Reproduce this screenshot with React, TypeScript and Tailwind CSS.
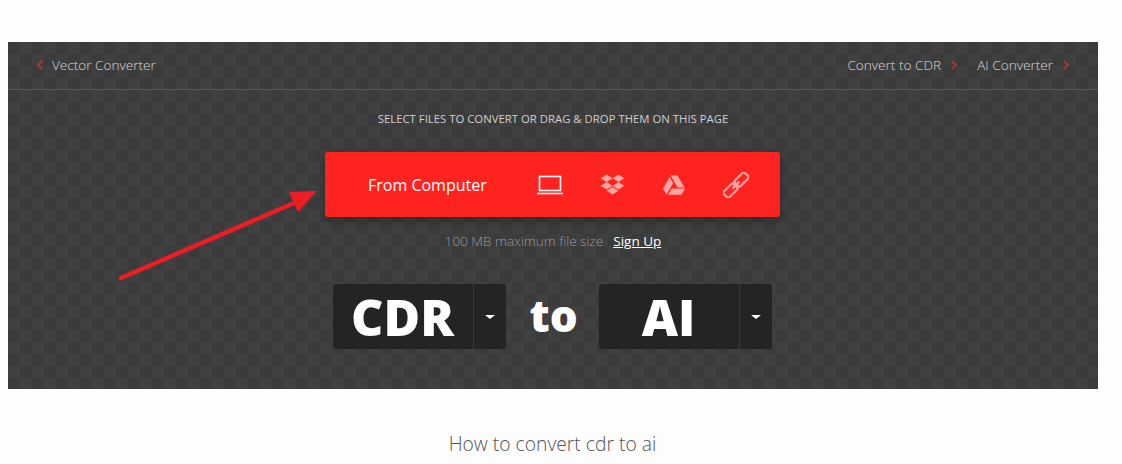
import { ChevronLeft, ChevronRight } from 'lucide-react';
import { FaDropbox, FaGoogleDrive } from 'react-icons/fa';

const Laptop = () => (
  <svg width="26" height="20" viewBox="0 0 26 20" fill="none" stroke="#fff">
    <rect x="2.5" y="1.5" width="21" height="14" strokeWidth="1.6" />
    <path d="M0 18.5h26" strokeWidth="1.6" />
  </svg>
);

const ChainLink = () => (
  <svg width="26" height="26" viewBox="0 0 26 26" fill="none" stroke="#ffa5a2" strokeWidth="2.2">
    <g transform="rotate(-45 13 13)">
      <rect x="-2" y="9" width="14" height="8" rx="1.5" />
      <rect x="14" y="9" width="14" height="8" rx="1.5" />
      <path d="M8 13h10" />
    </g>
  </svg>
);

const Arrow = () => (
  <svg className="absolute left-[108px] top-[146px]" width="210" height="100" viewBox="0 0 210 100" fill="none">
    <path d="M5 90 L 185 12" stroke="#ee1c25" strokeWidth="4.5" strokeLinecap="round" />
    <path d="M173 4 L 201 3 L 182 24 Z" fill="#ee1c25" />
  </svg>
);

const NavLink = ({ text }: { text: string }) => (
  <a className="flex items-center gap-[5px]">
    {text}
    <ChevronRight className="h-4 w-4 text-[#d8302c]" strokeWidth={2} />
  </a>
);

const Picker = ({ label }: { label: string }) => (
  <div className="flex h-[65px] w-[173px] items-stretch rounded-[3px] bg-[#242424]">
    <div className="flex flex-1 items-center justify-center border-r border-[#3a3a3a] text-[50px] leading-none font-extrabold text-white">
      {label}
    </div>
    <div className="flex w-[32px] items-center justify-center">
      <span className="h-0 w-0 border-x-[5px] border-t-[4px] border-x-transparent border-t-white" />
    </div>
  </div>
);

const App = () => {
  return (
    <div className="h-[464px] w-[1122px] overflow-hidden bg-[#fdfdfd] pt-[42px] pl-2 font-['Open_Sans',sans-serif]">
      <section className="relative h-[347px] w-[1090px] bg-[#3d3d3d] bg-[repeating-conic-gradient(#404040_0_25%,#3b3b3b_0_50%)] bg-[length:24px_24px]">
        <nav className="flex h-[48px] items-center justify-between border-b border-[#575757] pr-[24px] pl-[24px] text-[13.6px] font-light text-[#d8d8d8]">
          <a className="flex items-center gap-[4px]">
            <ChevronLeft className="h-4 w-4 text-[#d8302c]" strokeWidth={2} />
            Vector Converter
          </a>
          <div className="flex items-center gap-[15px]">
            <NavLink text="Convert to CDR" />
            <NavLink text="AI Converter" />
          </div>
        </nav>

        <div className="flex flex-col items-center">
          <p className="mt-[21px] text-[11.35px] leading-4 text-[#cfcfcf] uppercase">
            Select files to convert or drag &amp; drop them on this page
          </p>

          <div className="mt-[25px] mr-[1px] flex h-[65px] w-[455px] items-center rounded-[3px] bg-[#ff2320] pr-[31px] pl-[43px] shadow-[0_3px_8px_rgba(0,0,0,0.35)]">
            <span className="text-[16px] text-white">From Computer</span>
            <div className="ml-auto flex w-[212px] items-center justify-between">
              <Laptop />
              <FaDropbox className="h-[23px] w-[25px] text-[#ffa5a2]" />
              <FaGoogleDrive className="h-[22px] w-[24px] text-[#ffa5a2]" />
              <ChainLink />
            </div>
          </div>

          <p className="mt-[15px] flex gap-[10px] text-[13.5px] leading-[18px] font-light text-[#9a9a9a]">
            100 MB maximum file size
            <a className="font-normal text-white underline">Sign Up</a>
          </p>

          <div className="mt-[34px] mr-[2px] flex items-center">
            <Picker label="CDR" />
            <span className="mx-[24px] mb-[4px] w-[45px] text-center text-[44px] leading-none font-extrabold text-white">to</span>
            <Picker label="AI" />
          </div>
        </div>

        <Arrow />
      </section>

      <h2 className="mt-[43px] w-[1089px] text-center text-[19.3px] leading-6 font-light text-[#555]">
        How to convert cdr to ai
      </h2>
    </div>
  );
};

export default App;
